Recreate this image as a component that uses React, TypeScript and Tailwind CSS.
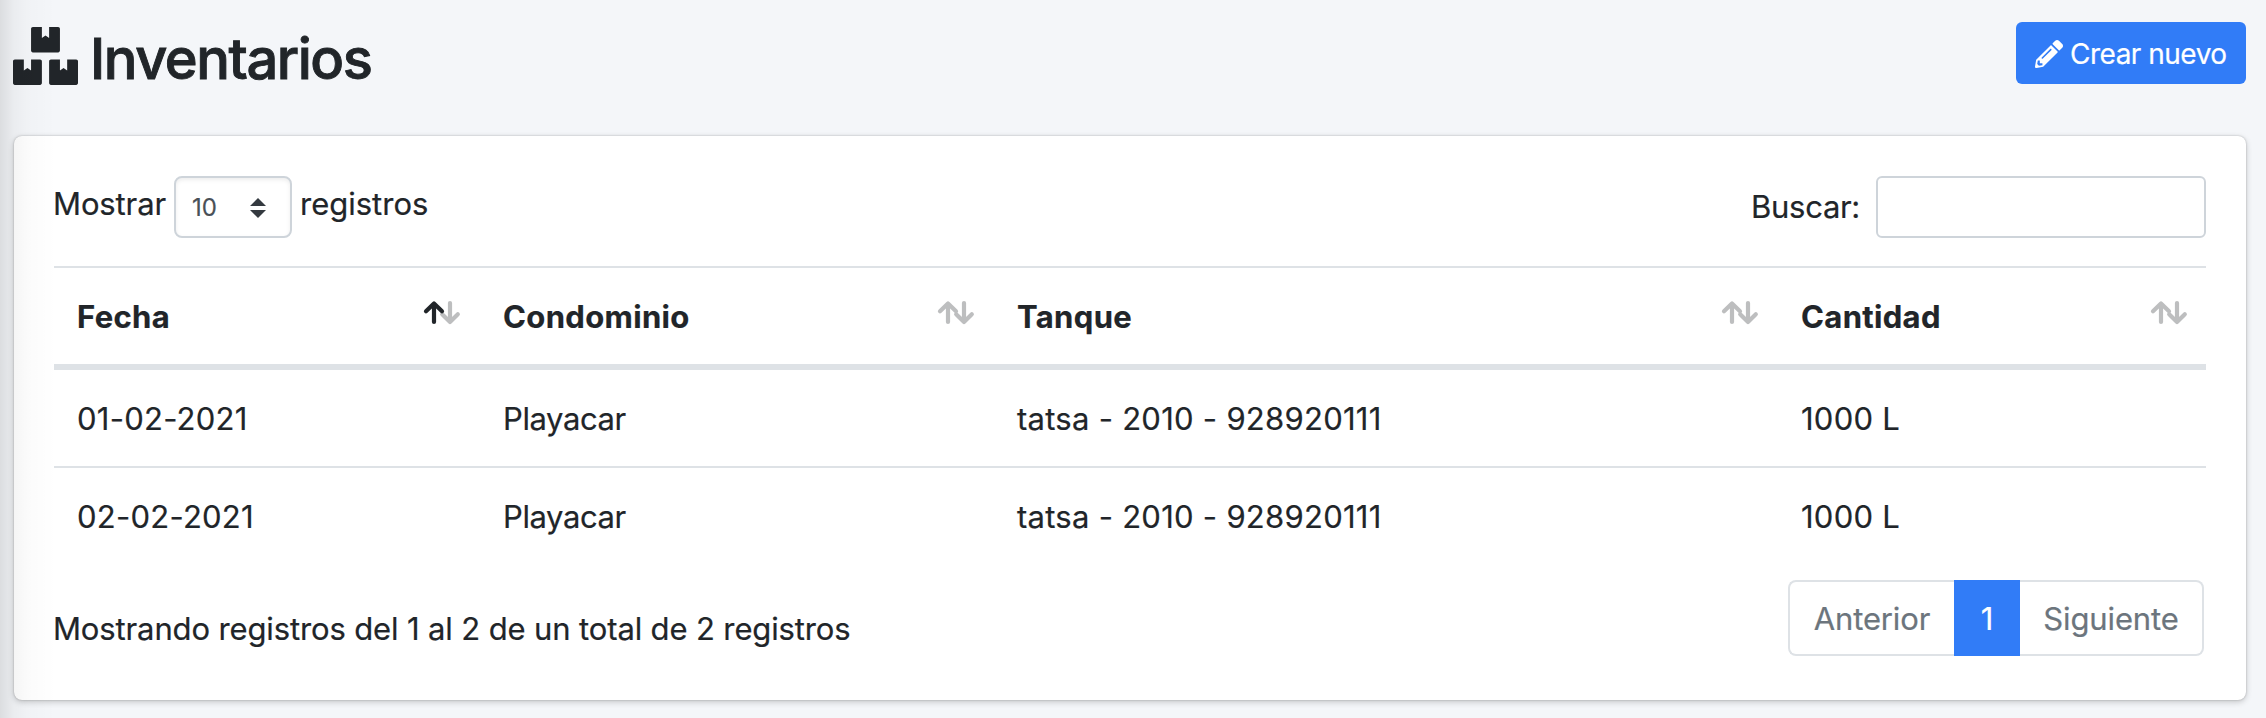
import { FaBoxes, FaPencilAlt } from "react-icons/fa";

type Column = { label: string; sorted?: boolean; width: string; cell: string; pad: string };

const columns: Column[] = [
  { label: "Fecha", sorted: true, width: "w-[425px]", cell: "tracking-[0.25px]", pad: "pl-[23px]" },
  { label: "Condominio", width: "w-[514px]", cell: "tracking-[-0.4px]", pad: "pl-6" },
  { label: "Tanque", width: "w-[784px]", cell: "tracking-[0.27px]", pad: "pl-6" },
  { label: "Cantidad", width: "w-[429px]", cell: "tracking-[0.25px]", pad: "pl-6" },
];

const rows = [
  ["01-02-2021", "Playacar", "tatsa - 2010 - 928920111", "1000 L"],
  ["02-02-2021", "Playacar", "tatsa - 2010 - 928920111", "1000 L"],
];

function SortIcon({ sorted }: { sorted?: boolean }) {
  return (
    <svg width="38" height="26" viewBox="0 0 38 26" fill="none" strokeWidth="4.2" strokeLinecap="round" strokeLinejoin="round">
      <path d="M27 3V22M19.200 14.300L27 22L34.800 14.300" stroke="#bdbebf" />
      <path d="M11 22V3.500M3 11.300L11 3.500L19 11.300" stroke={sorted ? "#212529" : "#bdbebf"} />
    </svg>
  );
}

export default function App() {
  return (
    <div className="relative h-[718px] w-[2266px] overflow-hidden bg-[#f4f6f9] pl-[14px] pr-5 font-['Inter',sans-serif] text-[31px] leading-[48px] tracking-[-0.12px] text-[#212529] [-webkit-text-stroke:0.2px]">
      <header className="flex h-[136px] items-start justify-between">
        <h1 className="flex items-start pt-[25px] text-[56px] font-medium leading-[68px] tracking-[-1.45px] [-webkit-text-stroke:0.9px]">
          <FaBoxes className="-ml-px mr-3 mt-[2px] h-[58px] w-[65px]" />
          <span>Inventarios</span>
        </h1>
        <button className="mt-[22px] flex h-[62px] w-[230px] items-center rounded-[6px] bg-[#317cf7] pl-[19px] text-[28px] tracking-[-0.5px] text-white">
          <FaPencilAlt className="mr-[7px] mt-[2px] h-7 w-7" />
          <span className="mt-[2px]">Crear nuevo</span>
        </button>
      </header>

      <main className="h-[564px] rounded-lg bg-white px-10 pt-10 shadow-[0_0_2px_rgba(0,0,0,0.25),0_2px_6px_rgba(0,0,0,0.2)]">
        <div className="flex h-[90px] items-start justify-between">
          <label className="-ml-px flex">
            <span className="mt-1 w-[113px]">Mostrar</span>
            <span className="ml-2 mr-2 flex h-[62px] w-[118px] items-center rounded-lg border-2 border-[#ced4da] pl-4 text-[24px] text-[#495057] shadow-[inset_0_2px_4px_rgba(0,0,0,0.075)]">
              <span className="mt-[2px] w-[58px]">10</span>
              <svg className="mt-[2px]" width="16" height="20" viewBox="0 0 4 5" fill="#343a40">
                <path d="M2 0L0 2h4zM2 5L0 3h4z" />
              </svg>
            </span>
            <span className="mt-1 tracking-normal">registros</span>
          </label>
          <label className="flex items-center">
            <span className="tracking-[-0.3px]">Buscar:</span>
            <input className="ml-4 h-[62px] w-[330px] rounded-[6px] border-2 border-[#ced4da] bg-white" />
          </label>
        </div>

        <table className="w-[2152px] table-fixed border-collapse text-left">
          <thead>
            <tr>
              {columns.map((c) => (
                <th key={c.label} className={`${c.width} p-0 font-bold`}>
                  <div className={`${c.pad} flex h-[104px] items-center justify-between border-b-[6px] border-t-2 border-[#dee2e6] pr-[18px]`}>
                    <span className="mt-[2px] tracking-[0.35px]">{c.label}</span>
                    <div className="mb-[7px]">
                      <SortIcon sorted={c.sorted} />
                    </div>
                  </div>
                </th>
              ))}
            </tr>
          </thead>
          <tbody>
            {rows.map((r, i) => (
              <tr key={i}>
                {r.map((v, j) => (
                  <td key={j} className={`${columns[j].cell} p-0`}>
                    <div className={`${columns[j].pad} pt-[25px] ${i === 0 ? "h-24" : "h-[98px] border-t-2 border-[#dee2e6]"}`}>{v}</div>
                  </td>
                ))}
              </tr>
            ))}
          </tbody>
        </table>

        <div className="flex items-start justify-between pt-4">
          <p className="-ml-px pt-[25px] tracking-[-0.13px]">Mostrando registros del 1 al 2 de un total de 2 registros</p>
          <nav className="mr-[2px] flex h-[76px] text-[#6c757d]">
            <a className="flex w-[166px] items-center justify-center rounded-l-lg border-2 border-r-0 border-[#dee2e6] pt-[2px]">Anterior</a>
            <a className="flex w-[66px] items-center justify-center bg-[#317cf7] pt-[2px] text-white">1</a>
            <a className="flex w-[184px] items-center justify-center rounded-r-lg border-2 border-l-0 border-[#dee2e6] pt-[2px]">Siguiente</a>
          </nav>
        </div>
      </main>
      <div className="pointer-events-none absolute inset-y-0 left-0 w-[56px] bg-[linear-gradient(to_right,rgba(0,0,0,0.1),rgba(0,0,0,0.04)_25%,rgba(0,0,0,0.015)_50%,transparent)]" />
    </div>
  );
}
